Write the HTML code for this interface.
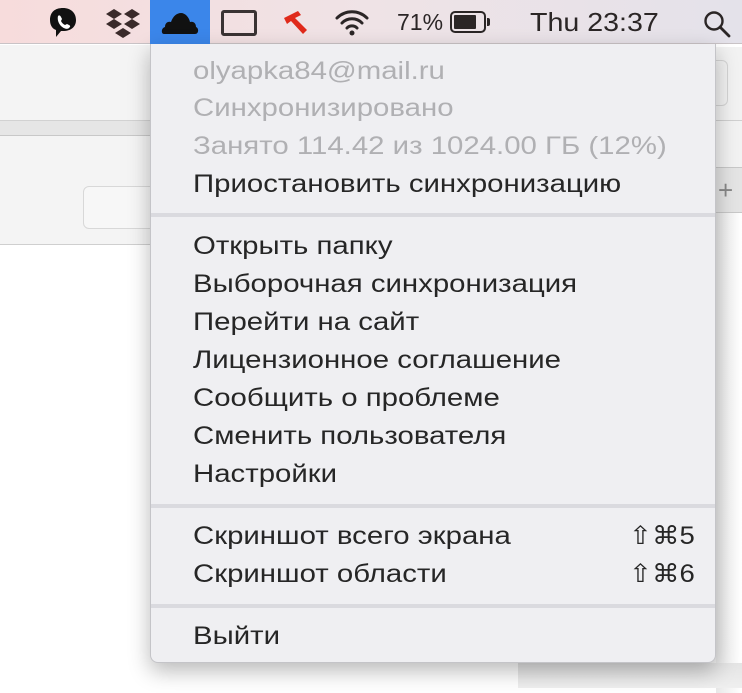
<!DOCTYPE html>
<html><head><meta charset="utf-8"><style>
*{margin:0;padding:0;box-sizing:border-box}
body{width:742px;height:688px;overflow:hidden;position:relative;background:#fff;font-family:"Liberation Sans","DejaVu Sans",sans-serif}
.bar{position:absolute;left:0;top:0;width:742px;height:44px;background:linear-gradient(90deg,#f7dcdc,#efe3e6 50%,#e4e2ea);border-bottom:1px solid #c9c3c6}
.abs{position:absolute}
.menu{position:absolute;left:150px;top:44px;width:566px;height:619px;background:#efeff2;border:1px solid #c4c4c8;border-top:none;border-radius:0 0 8px 8px;box-shadow:0 8px 22px rgba(0,0,0,.28)}
.it{position:absolute;left:42px;font-size:25px;color:#262626;line-height:30px;white-space:nowrap;transform:scaleX(1.175);transform-origin:0 50%}
.g{color:#b0b0b3}
.sep{position:absolute;left:0;width:564px;height:4px;background:#dadadf}
.sc{position:absolute;right:20px;font-size:25px;color:#262626;line-height:30px;transform:scaleX(1.1);transform-origin:100% 50%}
</style></head><body>
<div class="abs" style="left:0;top:45px;width:150px;height:200px;background:#f4f4f4"></div>
<div class="abs" style="left:0;top:120px;width:150px;height:1px;background:#d2d2d2"></div>
<div class="abs" style="left:0;top:121px;width:150px;height:14px;background:#e6e6e6"></div>
<div class="abs" style="left:0;top:135px;width:150px;height:1px;background:#c8c8c8"></div>
<div class="abs" style="left:83px;top:186px;width:80px;height:43px;border:1px solid #d8d8d8;border-radius:6px;background:#f7f7f7"></div>
<div class="abs" style="left:0;top:244px;width:150px;height:1px;background:#cfcfcf"></div>
<div class="abs" style="left:700px;top:47px;width:42px;height:640px;background:#f2f2f2;border-radius:8px 0 0 0"></div>
<div class="abs" style="left:716px;top:60px;width:12px;height:46px;border:1px solid #d5d5d5;border-left:none;border-radius:0 6px 6px 0"></div>
<div class="abs" style="left:716px;top:120px;width:26px;height:1px;background:#d0d0d0"></div>
<div class="abs" style="left:716px;top:167px;width:26px;height:1px;background:#c8c8c8"></div>
<div class="abs" style="left:716px;top:168px;width:26px;height:44px;background:#e4e4e4;color:#888;font-size:26px;line-height:44px;padding-left:2px">+</div>
<div class="abs" style="left:716px;top:212px;width:26px;height:1px;background:#c8c8c8"></div>
<div class="abs" style="left:716px;top:213px;width:26px;height:480px;background:linear-gradient(90deg,#e8e8e8,#fff)"></div>
<div class="abs" style="left:518px;top:663px;width:224px;height:25px;background:linear-gradient(180deg,#e4e4e4,#efefef)"></div>
<div class="bar">
 <svg class="abs" style="left:46px;top:6px" width="34" height="34" viewBox="0 0 34 34"><path d="M17 2C9 2 4 6 4 14c0 6 3 9 6 10v7l5-6c1 0 2 0 2 0 8 0 13-4 13-11S25 2 17 2z" fill="#111"/><path d="M12 10c1-1 2-1 3 1l1 2-1 2c1 2 2 3 4 4l2-1 2 1c2 1 1 2 0 3-2 2-6 0-8-2s-4-6-3-10z" fill="#fff"/></svg>
 <svg class="abs" style="left:104px;top:7px" width="38" height="32" viewBox="0 0 38 32"><g fill="#3a2a2a"><path d="M10 2l8 5-8 5-8-5z"/><path d="M28 2l8 5-8 5-8-5z"/><path d="M10 12l8 5-8 5-8-5z"/><path d="M28 12l8 5-8 5-8-5z"/><path d="M19 21l8 5-8 5-8-5z"/></g></svg>
 <div class="abs" style="left:150px;top:0;width:60px;height:44px;background:#3b86ea"></div>
 <svg class="abs" style="left:160px;top:9px" width="40" height="28" viewBox="0 0 40 28"><path d="M4 25c-3 0-3-6 1-7 0-4 3-6 6-5 2-6 6-9 10-9s8 4 9 9c3-1 6 1 6 5 3 1 3 7-1 7z" fill="#111"/></svg>
 <div class="abs" style="left:221px;top:10px;width:36px;height:26px;border:3px solid #3a3333;border-radius:3px"></div>
 <svg class="abs" style="left:282px;top:8px" width="28" height="28" viewBox="0 0 28 28"><path d="M2 10L16 3l3 4-6 3 12 12-4 4L9 13l-4 3z" fill="#e02a1b"/></svg>
 <svg class="abs" style="left:334px;top:8px" width="36" height="30" viewBox="0 0 36 30"><g fill="none" stroke="#2b2626" stroke-width="3" stroke-linecap="round"><path d="M3 10a21 21 0 0 1 30 0"/><path d="M8 15a14 14 0 0 1 20 0"/><path d="M13 20a7 7 0 0 1 10 0"/></g><circle cx="18" cy="25" r="2.5" fill="#2b2626"/></svg>
 <div class="abs" style="left:397px;top:8px;font-size:23px;color:#2b2626;line-height:28px">71%</div>
 <div class="abs" style="left:450px;top:11px;width:36px;height:22px;border:2px solid #2b2626;border-radius:5px;padding:2px"><div style="width:22px;height:14px;background:#2b2626;border-radius:1px"></div></div>
 <div class="abs" style="left:487px;top:18px;width:3px;height:8px;background:#2b2626;border-radius:0 2px 2px 0"></div>
 <div class="abs" style="left:530px;top:7px;font-size:26px;color:#2b2626;line-height:30px;transform:scaleX(1.1);transform-origin:0 50%">Thu 23:37</div>
 <svg class="abs" style="left:702px;top:9px" width="30" height="30" viewBox="0 0 30 30"><circle cx="12" cy="12" r="8.5" fill="none" stroke="#2b2626" stroke-width="2.4"/><path d="M18 18l9 9" stroke="#2b2626" stroke-width="2.8" stroke-linecap="round"/></svg>
</div>
<div class="menu">
 <div class="it g" style="top:12px">olyapka84@mail.ru</div>
 <div class="it g" style="top:49px">Синхронизировано</div>
 <div class="it g" style="top:87px">Занято 114.42 из 1024.00 ГБ (12%)</div>
 <div class="it" style="top:125px">Приостановить синхронизацию</div>
 <div class="sep" style="top:169px"></div>
 <div class="it" style="top:187px">Открыть папку</div>
 <div class="it" style="top:225px">Выборочная синхронизация</div>
 <div class="it" style="top:263px">Перейти на сайт</div>
 <div class="it" style="top:301px">Лицензионное соглашение</div>
 <div class="it" style="top:339px">Сообщить о проблеме</div>
 <div class="it" style="top:377px">Сменить пользователя</div>
 <div class="it" style="top:415px">Настройки</div>
 <div class="sep" style="top:460px"></div>
 <div class="it" style="top:477px">Скриншот всего экрана</div>
 <div class="sc" style="top:477px">⇧⌘5</div>
 <div class="it" style="top:515px">Скриншот области</div>
 <div class="sc" style="top:515px">⇧⌘6</div>
 <div class="sep" style="top:560px"></div>
 <div class="it" style="top:577px">Выйти</div>
</div>
</body></html>
